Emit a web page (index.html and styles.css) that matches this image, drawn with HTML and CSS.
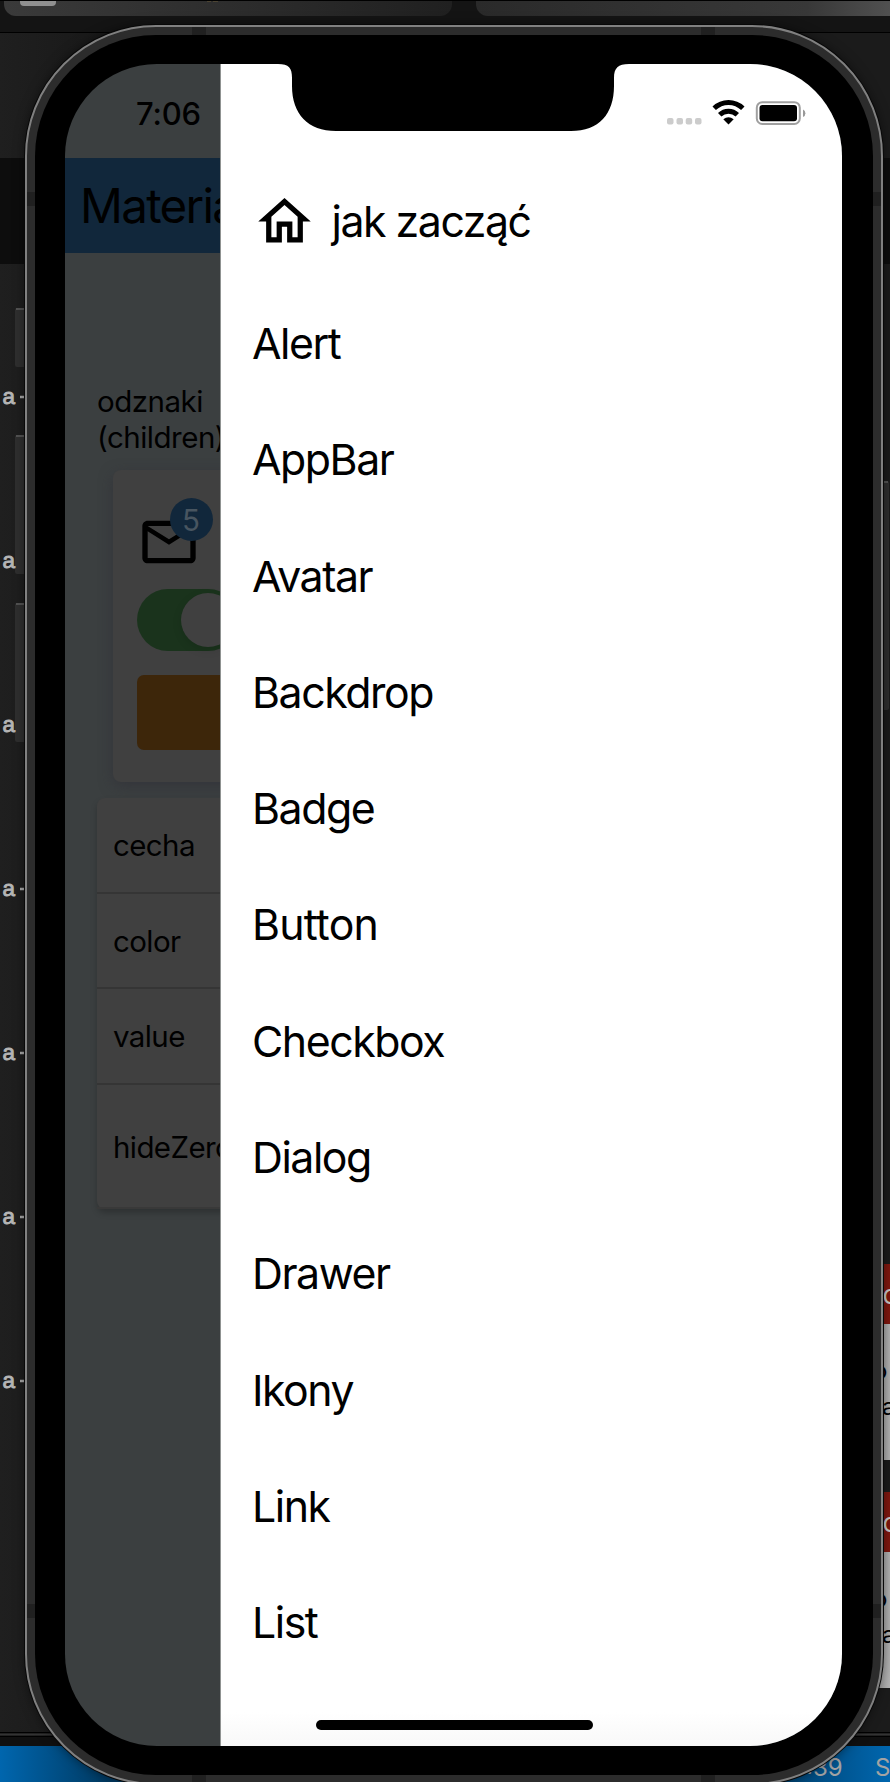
FILE: index.html
```html
<!DOCTYPE html>
<html lang="pl">
<head>
<meta charset="utf-8">
<title>Material</title>
<link rel="stylesheet" href="styles.css">
</head>
<body>
<svg class="desktop" width="890" height="1782" viewBox="0 0 890 1782">
  <defs>
    <linearGradient id="bar" x1="0" x2="1"><stop offset="0" stop-color="#3a3a3a"/><stop offset="1" stop-color="#202020"/></linearGradient>
    <linearGradient id="tab" x1="0" x2="1"><stop offset="0" stop-color="#2a2a2a"/><stop offset=".8" stop-color="#383838"/><stop offset="1" stop-color="#505050"/></linearGradient>
    <linearGradient id="side" x1="0" x2="1"><stop offset="0" stop-color="#1f1f1f"/><stop offset="1" stop-color="#131313"/></linearGradient>
    <linearGradient id="paper" x1="0" x2="1"><stop offset="0" stop-color="#8f8f8f"/><stop offset="1" stop-color="#b3b3b3"/></linearGradient>
    <linearGradient id="foot" x1="0" x2="1"><stop offset="0" stop-color="#0066ae"/><stop offset=".12" stop-color="#003a62"/><stop offset=".85" stop-color="#003a62"/><stop offset="1" stop-color="#0066ae"/></linearGradient>
  </defs>
  <rect width="890" height="33" fill="#141414"/>
  <path d="M4 0H452V4a12 12 0 0 1-12 12H16A12 12 0 0 1 4 4Z" fill="url(#bar)"/>
  <path d="M476 0H890V16H488A12 12 0 0 1 476 4Z" fill="url(#tab)"/>
  <path d="M20 1H56V2a4 4 0 0 1-4 4H24a4 4 0 0 1-4-4Z" fill="#909090"/>
  <path d="M207 1l4 0M213 1l5 0" stroke="#6b5a38"/>
  <path d="M0 .5H890M0 32.5H890" stroke="#000"/>
  <rect y="33" width="200" height="1699" fill="url(#side)"/>
  <rect y="158" width="60" height="106" fill="#0d0d0d"/>
  <rect x="700" y="33" width="190" height="1699" fill="#1b1b1b"/>
  <rect x="860" y="158" width="30" height="106" fill="#0d0d0d"/>
  <g fill="#2f2f2f">
    <rect x="15" y="308" width="20" height="59" rx="2"/>
    <rect x="15" y="435" width="20" height="139" rx="2"/>
    <rect x="15" y="603" width="20" height="139" rx="2"/>
    <rect x="870" y="481" width="19" height="229" rx="2"/>
  </g>
  <path d="M16 309H35M16 436H35M16 604H35M870 482H888" stroke="#606060" stroke-width="1.5"/>
  <g class="code">
    <text x="2.5" y="403.500">a</text><text x="2.5" y="567.500">a</text><text x="2.5" y="731.500">a</text>
    <text x="2.5" y="895.500">a</text><text x="2.5" y="1059.500">a</text><text x="2.5" y="1223.500">a</text><text x="2.5" y="1387.500">a</text>
  </g>
  <path d="M20 397h6M20 889h6M20 1053h6M20 1217h6M20 1381h6" stroke="#aaa" stroke-width="2.5"/>
  <rect x="860" y="1264" width="30" height="60" fill="#80170f"/>
  <rect x="860" y="1324" width="30" height="136" fill="url(#paper)"/>
  <rect x="860" y="1492" width="30" height="60" fill="#80170f"/>
  <rect x="860" y="1552" width="30" height="136" fill="url(#paper)"/>
  <g class="note note--head"><text x="882.500" y="1304">c</text><text x="882.500" y="1532">c</text></g>
  <g class="note">
    <text x="873" y="1379">o</text><text x="882" y="1415">a</text>
    <text x="873" y="1607">o</text><text x="882" y="1643">a</text>
  </g>
  <rect y="1732" width="890" height="14" fill="#101010"/>
  <path d="M0 1732.5H890M0 1736.5H890" stroke="#000"/>
  <path d="M0 1734.500H890" stroke="#333" stroke-width="2"/>
  <rect y="1746" width="890" height="36" fill="url(#foot)"/>
  <g class="foot-text"><text x="806" y="1776">:39</text><text x="875" y="1776">S</text></g>
</svg>

<main class="phone">
  <i class="band band--tl"></i><i class="band band--tr"></i>
  <i class="band band--bl"></i><i class="band band--br"></i>
  <i class="band band--lt"></i><i class="band band--rt"></i>
  <i class="band band--lb"></i><i class="band band--rb"></i>
  <div class="bezel">
    <div class="screen">
      <section class="app">
        <div class="clock">7:06</div>
        <header class="appbar">Material</header>
        <div class="content">
          <p class="caption">odznaki<br>(children)</p>
          <div class="card">
            <div class="mail">
              <svg width="64" height="64" viewBox="0 0 24 24"><path d="M22 6c0-1.100-.9-2-2-2H4c-1.100 0-2 .9-2 2v12c0 1.100.9 2 2 2h16c1.100 0 2-.9 2-2V6zm-2 0l-8 5-8-5h16zm0 12H4V8l8 5 8-5v10z"/></svg>
              <span class="badge">5</span>
            </div>
            <div class="switch"><span class="knob"></span></div>
            <div class="button"></div>
          </div>
          <div class="table">
            <div class="row">cecha</div>
            <div class="row">color</div>
            <div class="row">value</div>
            <div class="row row--tall">hideZero</div>
          </div>
        </div>
      </section>
      <nav class="drawer">
        <div class="status">
          <svg width="140" height="28" viewBox="666 98 140 28">
            <g fill="#ccc"><rect x="667" y="118" width="6.500" height="6.500" rx="2"/><rect x="676.500" y="118" width="6.500" height="6.500" rx="2"/><rect x="685.700" y="118" width="6.500" height="6.500" rx="2"/><rect x="695" y="118" width="6.500" height="6.500" rx="2"/></g>
            <g fill="none" stroke="#000" stroke-width="4.900"><path d="M714.200 108.300A20.500 20.500 0 0 1 742.800 108.300"/><path d="M719.700 114.800A12.600 12.600 0 0 1 737.300 114.800"/></g>
            <path d="M723.300 119.300Q728.500 115 733.700 119.300L728.500 124.600Z"/>
            <rect x="756.800" y="102.200" width="43" height="21.800" rx="5.500" fill="none" stroke="#a0a0a0" stroke-width="2"/>
            <rect x="759.500" y="105" width="37.500" height="16.200" rx="3"/>
            <path d="M803 109.500q2.400 1 2.400 3.700t-2.400 3.700z" fill="#999"/>
          </svg>
        </div>
        <a class="item item--home">
          <svg width="63" height="63" viewBox="0 0 24 24"><path d="M12 5.690l5 4.500V18h-2v-6H9v6H7v-7.810l5-4.500M12 3L2 12h3v8h6v-6h2v6h6v-8h3L12 3z"/></svg>
          <span>jak zacząć</span>
        </a>
        <a class="item">Alert</a>
        <a class="item">AppBar</a>
        <a class="item">Avatar</a>
        <a class="item">Backdrop</a>
        <a class="item">Badge</a>
        <a class="item item--button">Button</a>
        <a class="item">Checkbox</a>
        <a class="item">Dialog</a>
        <a class="item">Drawer</a>
        <a class="item">Ikony</a>
        <a class="item">Link</a>
        <a class="item">List</a>
      </nav>
      <svg class="notch" width="351" height="68" viewBox="0 0 351 68"><path d="M0 0V1C11 1 14 5 14 15V23C14 51 30 68 58 68H293C321 68 336 51 336 23V15C336 5 340 1 351 1V0Z"/></svg>
      <span class="home-bar"></span>
    </div>
  </div>
</main>
</body>
</html>
```
FILE: styles.css
```css
* { box-sizing: border-box; }
body {
  margin: 0;
  width: 890px;
  height: 1782px;
  overflow: hidden;
  position: relative;
  background: #171717;
  font-family: Inter, "Liberation Sans", sans-serif;
  color: #000;
}
.desktop { position: absolute; left: 0; top: 0; }
.code { font: 22.5px "Liberation Sans", sans-serif; fill: #b5b5b5; stroke: #b5b5b5; stroke-width: .9px; }
.note { font: 24px Inter, sans-serif; fill: #000; }
.note--head { fill: #ccc; font-size: 26px; }
.foot-text { font: 24px Inter, sans-serif; fill: #a3a3a3; }

.phone {
  position: relative;
  width: 858px;
  height: 1760px;
  margin: 25px 0 0 25px;
  padding: 8px;
  border: 2px solid #808080;
  border-radius: 131px;
  background: #2c2c2c;
  box-shadow: 0 0 0 1px #080808, 0 0 12px rgba(0, 0, 0, .5);
}
.band { position: absolute; background: #202020; }
.band--tl, .band--tr { top: 0; width: 14px; height: 8px; }
.band--bl, .band--br { bottom: 0; width: 14px; height: 8px; }
.band--tl, .band--bl { left: 165px; }
.band--tr, .band--br { left: 674px; }
.band--lt, .band--rt { top: 165px; width: 8px; height: 14px; }
.band--lb, .band--rb { top: 1577px; width: 8px; height: 14px; }
.band--lt, .band--lb { left: 0; }
.band--rt, .band--rb { right: 0; }
.bezel { height: 1740px; padding: 29px 31px 29px 30px; border-radius: 121px; background: #000; }
.screen {
  position: relative;
  display: flex;
  height: 1682px;
  border-radius: 92px;
  overflow: hidden;
  background: #3b3f40;
}

.app { width: 155px; overflow: hidden; white-space: nowrap; }
.clock { height: 94px; padding: 30px 0 0 71px; font-size: 31px; font-weight: 550; line-height: 40px; letter-spacing: -.2px; }
.appbar { height: 95px; padding-left: 15px; background: #11273b; font-size: 47.500px; line-height: 95px; letter-spacing: -1.700px; }
.content { width: 400px; padding: 130px 0 0 32px; font-size: 29px; }
.caption { margin: 0; height: 87px; line-height: 36px; font-size: 29.500px; letter-spacing: -.5px; }
.card {
  width: 330px;
  height: 312px;
  margin-left: 16px;
  padding: 40px 24px 0;
  border-radius: 8px;
  background: #404040;
  box-shadow: 0 4px 14px rgba(48, 48, 56, .7);
}
.mail { position: relative; width: 64px; height: 79px; }
.mail svg { display: block; }
.badge {
  position: absolute;
  left: 32.500px;
  top: -12px;
  width: 43px;
  height: 43px;
  border-radius: 50%;
  background: #11273b;
  color: #485560;
  font-size: 29.500px;
  line-height: 44px;
  text-align: center;
}
.switch { width: 102px; height: 62px; padding: 4px 0 0 44px; border-radius: 31px; background: #1a331c; }
.knob { display: block; width: 54px; height: 54px; border-radius: 50%; background: #404040; box-shadow: 0 3px 10px rgba(0, 0, 0, .12); }
.button { height: 75px; margin-top: 24px; border-radius: 7px; background: #3d260a; }
.table { width: 350px; margin-top: 16px; border-radius: 8px; background: #404040; box-shadow: 0 4px 6px rgba(0, 0, 0, .22); }
.row { height: 95.500px; padding-left: 16px; border-bottom: 2px solid #353535; line-height: 94px; font-size: 29.500px; letter-spacing: -.6px; }
.row--tall { height: 124.500px; line-height: 124px; border-bottom-color: #393939; }

.drawer {
  flex: 1;
  border-left: 1px solid #8f9291;
  background: linear-gradient(#fff 98%, #f8f8f8);
}
.status { height: 97px; padding: 34px 0 0 445px; }
.status svg { display: block; }
.item { display: flex; align-items: center; height: 116.270px; padding-left: 31px; font-size: 42.800px; line-height: 50px; letter-spacing: -1.450px; }
.item--button { letter-spacing: -.800px; }
.item--home { height: 125px; padding: 0 0 4px 31.500px; }
.item--home span { margin-left: 16px; }

.notch { position: absolute; left: 213px; top: -1px; }
.home-bar { position: absolute; left: 250.500px; bottom: 16px; width: 277px; height: 10px; border-radius: 5px; background: #000; }
```
